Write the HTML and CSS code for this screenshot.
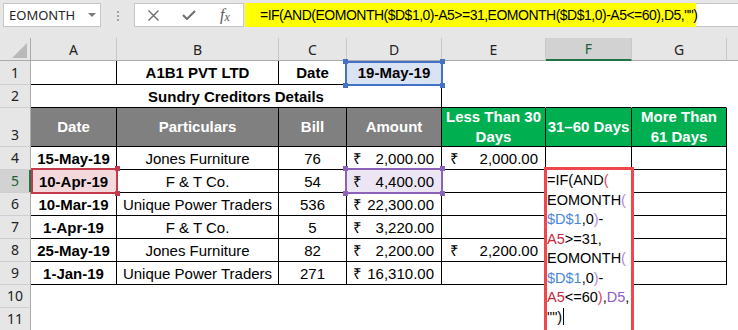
FILE: index.html
```html
<!DOCTYPE html>
<html>
    <head>
        <title>EOMONTH - Sundry Creditors</title>
        <link rel="stylesheet" href="styles.css">
    </head>
    <body>

        <!-- name box + formula bar -->
        <div class="toolbar">
            <div class="namebox"><span>EOMONTH</span><span class="dropdown"></span></div>
            <div class="grip"><i></i><i></i><i></i></div>
            <div class="fxbox">
                <span class="fxbtn">
                    <svg width="11" height="11" viewBox="0 0 11 11"><path d="M0.5 0.5 L10.5 10.5 M10.5 0.5 L0.5 10.5" stroke="#6e6e6e" stroke-width="1.4" fill="none"/></svg>
                </span>
                <span class="fxbtn">
                    <svg width="14" height="10" viewBox="0 0 14 10"><path d="M1 5 L5 9 L13 1" stroke="#6e6e6e" stroke-width="2" fill="none"/></svg>
                </span>
                <span class="fxbtn fx"><i>f</i><i class="fx-x">x</i></span>
            </div>
            <div class="formula">
                <span class="formula-hl">=IF(AND(EOMONTH($D$1,0)-A5&gt;=31,EOMONTH($D$1,0)-A5&lt;=60),D5,"")</span>
            </div>
        </div>

        <!-- worksheet -->
        <div class="sheet">
            <!-- column headers -->
            <div class="corner"><span class="corner-tri"></span></div>
            <div class="ch">A</div>
            <div class="ch">B</div>
            <div class="ch">C</div>
            <div class="ch">D</div>
            <div class="ch">E</div>
            <div class="ch ch-sel">F</div>
            <div class="ch">G</div>
            <div class="ch ch-end"></div>

            <!-- row 1 -->
            <div class="rh">1</div>
            <div class="c b"></div>
            <div class="c b strong">A1B1 PVT LTD</div>
            <div class="c b strong">Date</div>
            <div class="c b strong ref fill-blue">19-May-19
                <span class="mark mark-d1 blue"><i class="hd tl"></i><i class="hd tr"></i><i class="hd bl"></i><i class="hd br"></i></span>
            </div>
            <div class="c"></div><div class="c"></div><div class="c"></div><div class="c"></div>

            <!-- row 2 -->
            <div class="rh">2</div>
            <div class="c b strong span4">Sundry Creditors Details</div>
            <div class="c bb"></div><div class="c bb"></div><div class="c bb"></div><div class="c"></div>

            <!-- row 3 -->
            <div class="rh">3</div>
            <div class="c b head-gray">Date</div>
            <div class="c b head-gray">Particulars</div>
            <div class="c b head-gray">Bill</div>
            <div class="c b head-gray">Amount</div>
            <div class="c b head-green">Less Than 30<br>Days</div>
            <div class="c b head-green">31–60 Days</div>
            <div class="c b head-green">More Than<br>61 Days</div>
            <div class="c"></div>

            <!-- row 4 -->
            <div class="rh">4</div>
            <div class="c b strong">15-May-19</div>
            <div class="c b">Jones Furniture</div>
            <div class="c b">76</div>
            <div class="c b acct"><span>₹</span><span>2,000.00</span></div>
            <div class="c b acct acct-e"><span>₹</span><span>2,000.00</span></div>
            <div class="c b"></div>
            <div class="c b"></div>
            <div class="c"></div>

            <!-- row 5 -->
            <div class="rh rh-sel">5</div>
            <div class="c b strong ref fill-red">10-Apr-19
                <span class="mark mark-a5 red"><i class="hd tr"></i><i class="hd br"></i></span>
            </div>
            <div class="c b">F &amp; T Co.</div>
            <div class="c b">54</div>
            <div class="c b acct ref fill-purple"><span>₹</span><span>4,400.00</span>
                <span class="mark mark-d5 purple"><i class="hd tl"></i><i class="hd tr"></i><i class="hd bl"></i><i class="hd br"></i></span>
            </div>
            <div class="c b"></div>
            <div class="c b ref">
                <!-- in-cell editor -->
                <div class="editor">
                    <div>=IF(AND<span class="k-and">(</span></div>
                    <div>EOMONTH<span class="k-eo">(</span></div>
                    <div><span class="k-d1">$D$1</span>,0<span class="k-eo">)</span>-</div>
                    <div><span class="k-a5">A5</span>&gt;=31,</div>
                    <div>EOMONTH<span class="k-eo">(</span></div>
                    <div><span class="k-d1">$D$1</span>,0<span class="k-eo">)</span>-</div>
                    <div><span class="k-a5">A5</span>&lt;=60<span class="k-and">)</span>,<span class="k-d5">D5</span>,</div>
                    <div>"")<span class="caret"></span></div>
                </div>
            </div>
            <div class="c b"></div>
            <div class="c"></div>

            <!-- row 6 -->
            <div class="rh">6</div>
            <div class="c b strong">10-Mar-19</div>
            <div class="c b">Unique Power Traders</div>
            <div class="c b">536</div>
            <div class="c b acct"><span>₹</span><span>22,300.00</span></div>
            <div class="c b"></div>
            <div class="c b"></div>
            <div class="c b"></div>
            <div class="c"></div>

            <!-- row 7 -->
            <div class="rh">7</div>
            <div class="c b strong">1-Apr-19</div>
            <div class="c b">F &amp; T Co.</div>
            <div class="c b">5</div>
            <div class="c b acct"><span>₹</span><span>3,220.00</span></div>
            <div class="c b"></div>
            <div class="c b"></div>
            <div class="c b"></div>
            <div class="c"></div>

            <!-- row 8 -->
            <div class="rh">8</div>
            <div class="c b strong">25-May-19</div>
            <div class="c b">Jones Furniture</div>
            <div class="c b">82</div>
            <div class="c b acct"><span>₹</span><span>2,200.00</span></div>
            <div class="c b acct acct-e"><span>₹</span><span>2,200.00</span></div>
            <div class="c b"></div>
            <div class="c b"></div>
            <div class="c"></div>

            <!-- row 9 -->
            <div class="rh">9</div>
            <div class="c b strong">1-Jan-19</div>
            <div class="c b">Unique Power Traders</div>
            <div class="c b">271</div>
            <div class="c b acct"><span>₹</span><span>16,310.00</span></div>
            <div class="c b"></div>
            <div class="c b"></div>
            <div class="c b"></div>
            <div class="c"></div>

            <!-- rows 10, 11 -->
            <div class="rh">10</div>
            <div class="c"></div><div class="c"></div><div class="c"></div><div class="c"></div>
            <div class="c"></div><div class="c"></div><div class="c"></div><div class="c"></div>

            <div class="rh">11</div>
            <div class="c"></div><div class="c"></div><div class="c"></div><div class="c"></div>
            <div class="c"></div><div class="c"></div><div class="c"></div><div class="c"></div>
        </div>

    </body>
</html>
```

FILE: styles.css
```css
* {
    box-sizing: border-box;
}

body {
    margin: 0;
    width: 738px;
    height: 330px;
    overflow: hidden;
    background-color: #ffffff;
    font-family: "Liberation Sans", Arial, sans-serif;
}

/* ---------- formula bar ---------- */
.toolbar {
    display: flex;
    align-items: flex-start;
    height: 38px;
    padding: 3px 0 0 3px;
    background-color: #e6e6e6;
}

.namebox {
    display: flex;
    align-items: center;
    justify-content: space-between;
    width: 98px;
    height: 24px;
    padding: 0 4px 0 5px;
    background-color: #ffffff;
    border: 1px solid #c6c6c6;
    font-family: "Noto Sans", sans-serif;
    font-size: 13px;
    color: #262626;
}
.dropdown {
    width: 0;
    height: 0;
    border-left: 4px solid transparent;
    border-right: 4px solid transparent;
    border-top: 4px solid #7a7a7a;
}

.grip {
    display: flex;
    flex-direction: column;
    align-items: center;
    gap: 2px;
    width: 33px;
    padding-top: 8px;
}
.grip i {
    width: 2px;
    height: 2px;
    background-color: #a2a2a2;
}

.fxbox {
    display: flex;
    width: 110px;
    height: 24px;
    background-color: #ffffff;
    border: 1px solid #c6c6c6;
}
.fxbtn {
    display: flex;
    align-items: center;
    justify-content: center;
    width: 36px;
}
.fx {
    font-family: "Liberation Serif", serif;
    color: #5a5a5a;
    font-size: 16px;
}
.fx-x {
    font-size: 12px;
    margin-top: 4px;
}

.formula {
    display: flex;
    flex: 1;
    height: 24px;
    margin-left: 1px;
    background-color: #ffffff;
    border: 1px solid #c6c6c6;
    border-right: none;
}
.formula-hl {
    display: flex;
    align-items: center;
    width: 451px;
    margin: -1px 0 -1px -1px;
    padding-left: 15px;
    background-color: #ffff00;
    font-family: "Liberation Sans", Arial, sans-serif;
    font-size: 14px;
    letter-spacing: -0.5px;
    color: #000000;
    white-space: nowrap;
}

/* ---------- sheet grid ---------- */
.sheet {
    display: grid;
    grid-template-columns: 31px 86px 162px 68px 95px 104px 86px 95px 11px;
    grid-template-rows: 23px 24px 23px 39px repeat(8, 23px);
}

.corner {
    display: flex;
    align-items: flex-end;
    justify-content: flex-end;
    padding: 0 3px 2px 0;
    background-color: #e6e6e6;
    border-right: 1px solid #ababab;
    border-bottom: 1px solid #ababab;
}
.corner-tri {
    width: 0;
    height: 0;
    border-left: 15px solid transparent;
    border-bottom: 15px solid #b9b9b9;
}

.ch {
    display: flex;
    align-items: center;
    justify-content: center;
    background-color: #e6e6e6;
    border-right: 1px solid #c8c8c8;
    border-bottom: 1px solid #ababab;
    font-family: "Noto Sans", sans-serif;
    font-size: 14px;
    color: #222222;
}
.ch-sel {
    background-color: #d2d2d2;
    border-bottom: 2px solid #217346;
    color: #1d5e38;
}
.ch-end {
    border-right: none;
}

.rh {
    display: flex;
    align-items: flex-end;
    justify-content: center;
    padding-bottom: 2px;
    background-color: #e6e6e6;
    border-right: 1px solid #ababab;
    border-bottom: 1px solid #cfcfcf;
    font-family: "Noto Sans", sans-serif;
    font-size: 14px;
    line-height: 18px;
    color: #222222;
}
.rh-sel {
    background-color: #d2d2d2;
    border-right-color: #217346;
    box-shadow: inset -1px 0 0 #217346;
    color: #1d5e38;
}

/* cells: each owns its right and bottom line */
.c {
    display: flex;
    align-items: center;
    justify-content: center;
    border-right: 1px solid #ffffff;
    border-bottom: 1px solid #ffffff;
    font-size: 15px;
    color: #000000;
    white-space: nowrap;
}
.b {
    border-right-color: #000000;
    border-bottom-color: #000000;
}
.bb {
    border-bottom-color: #000000;
}
.strong {
    font-weight: bold;
}
.span4 {
    grid-column: span 4;
}

.head-gray,
.head-green {
    font-weight: bold;
    color: #ffffff;
    text-align: center;
    line-height: 20px;
}
.head-gray {
    background-color: #808080;
}
.head-green {
    background-color: #00b050;
}

.acct {
    justify-content: space-between;
    padding: 0 7px 0 6px;
}
.acct-e {
    padding-left: 8px;
}

/* formula reference highlights */
.ref {
    position: relative;
}
.fill-blue {
    background-color: #dae3f3;
}
.fill-red {
    background-color: #f4d9dc;
}
.fill-purple {
    background-color: #ece6f4;
}

.mark {
    position: absolute;
    z-index: 1;
    border: 2px solid currentColor;
}
.blue {
    color: #4472c4;
}
.red {
    color: #c23a4c;
}
.purple {
    color: #8a62b8;
}
.mark-d1 {
    left: -2px;
    top: 0;
    right: -2px;
    bottom: -2px;
}
.mark-a5 {
    left: 0;
    top: -2px;
    right: -2px;
    bottom: -2px;
}
.mark-d5 {
    left: -2px;
    top: -2px;
    right: -2px;
    bottom: -2px;
}
.hd {
    position: absolute;
    width: 5px;
    height: 5px;
    background-color: currentColor;
}
.tl { left: -4px; top: -4px; }
.tr { right: -4px; top: -4px; }
.bl { left: -4px; bottom: -4px; }
.br { right: -4px; bottom: -4px; }

/* in-cell editor for F5 */
.editor {
    position: absolute;
    z-index: 3;
    left: -2px;
    top: -3px;
    width: 90px;
    height: 166px;
    padding-top: 1px;
    background-color: #ffffff;
    border: 3px solid #f0474c;
    font-size: 14.5px;
    line-height: 19.5px;
    color: #000000;
    white-space: nowrap;
}
.k-and { color: #e2456a; }
.k-eo { color: #b386e0; }
.k-d1 { color: #4a86df; }
.k-a5 { color: #c9283e; }
.k-d5 { color: #8a5cc8; }
.caret {
    display: inline-block;
    width: 1px;
    height: 17px;
    margin-left: 1px;
    vertical-align: -3px;
    background-color: #000000;
}
```
